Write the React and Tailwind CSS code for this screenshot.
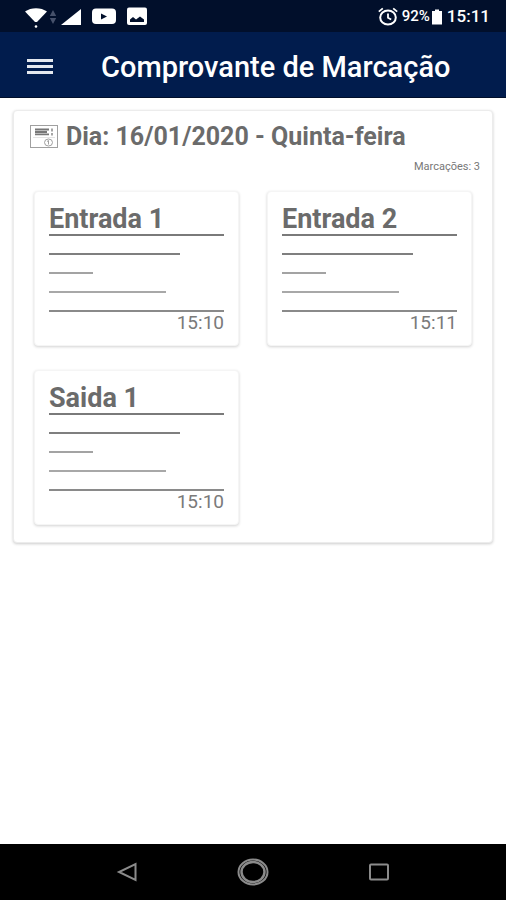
import { useState } from 'react';

const punches = [
  { label: 'Entrada 1', time: '15:10' },
  { label: 'Entrada 2', time: '15:11' },
  { label: 'Saida 1', time: '15:10' },
];

function StatusBar() {
  return (
    <div className="flex h-8 items-center justify-between bg-[#010f2b] pl-6 pr-4 text-white">
      <div className="flex items-center gap-2 pt-px">
        <div className="flex items-center gap-px">
          <svg className="h-6 w-6" viewBox="0 0 24 24" fill="currentColor">
            <path d="M1 6.500C7 2 17 2 23 6.500L13 17h-2z" />
            <circle cx="12" cy="21.500" r="1.300" />
          </svg>
          <svg className="h-4 w-2" viewBox="0 0 8 16" fill="#46516b">
            <path d="M4 1l3.200 6H.8zM4 15L.8 9h6.400z" />
          </svg>
        </div>
        <svg className="-ml-1 h-5 w-5" viewBox="0 0 20 20" fill="currentColor">
          <path d="M20 2v16H0z" />
        </svg>
        <svg className="ml-[3px] h-5 w-6" viewBox="0 0 24 20">
          <rect x="0" y="1.500" width="24" height="15.500" rx="4" fill="#fff" />
          <path d="M9 6.500v6l6-3z" fill="#010f2b" />
        </svg>
        <svg className="ml-[3px] h-5 w-5" viewBox="0 0 20 20">
          <rect x="0" y="0.500" width="20" height="17.500" rx="2" fill="#fff" />
          <path d="M3 15v-2.500l3-2.500 3 2.500 4-3 4 3V15z" fill="#010f2b" />
        </svg>
      </div>
      <div className="flex items-center gap-1 pt-px font-medium">
        <svg className="h-5 w-5" viewBox="0 0 20 20" fill="none" stroke="currentColor" strokeWidth="2">
          <ellipse cx="10" cy="10.500" rx="7.800" ry="7" />
          <path d="M10 6.500v4.300l3.200 1.700M.8 4.600L4.800 1.400M19.200 4.600l-4-3.200" strokeWidth="1.800" />
        </svg>
        <span className="text-[15px]">92%</span>
        <svg className="-ml-[3px] h-4 w-3" viewBox="0 0 12 16" fill="currentColor">
          <path d="M1 2h3V.5h4V2h3v13.500H1z" />
        </svg>
        <span className="text-[17px]">15:11</span>
      </div>
    </div>
  );
}

function ReceiptIcon() {
  return (
    <svg className="h-6 w-7 shrink-0" viewBox="0 0 28 24" fill="none" stroke="#a0a0a0">
      <rect x="0.500" y="0.500" width="27" height="22" />
      <path d="M5 4.500h14M5 7h12M5 9.300h14" stroke="#777" strokeWidth="1.800" />
      <path d="M22 3.500v3M22 8v2.500" stroke="#888" strokeWidth="1.500" />
      <path d="M3 12.500h22" stroke="#e4e4e4" />
      <ellipse cx="18.500" cy="17.500" rx="4" ry="3.500" />
      <path d="M18.500 15.500v4M17 16.500l1.500-1" />
    </svg>
  );
}

function PunchCard({ label, time }) {
  return (
    <article className="rounded-sm border border-[#f5f5f5] bg-white px-[14px] py-3 shadow-[0_1px_3px_rgba(0,0,0,0.18)]">
      <h3 className="text-[27px] leading-[30px] font-bold text-[#6b6b6b]">{label}</h3>
      <div className="flex flex-col gap-[17px]">
        <div className="h-[2px] w-full bg-[#7a7a7a]" />
        <div className="h-[2px] w-3/4 bg-[#7f7f7f]" />
        <div className="h-[2px] w-1/4 bg-[#a3a3a3]" />
        <div className="h-[2px] w-2/3 bg-[#a8a8a8]" />
        <div className="h-[2px] w-full bg-[#8a8a8a]" />
      </div>
      <p className="pt-px text-right text-[19px] leading-5 text-[#7a7a7a]">{time}</p>
    </article>
  );
}

export default function App() {
  const [menuOpen, setMenuOpen] = useState(false);

  return (
    <div className="flex min-h-screen flex-col bg-white font-['Roboto',sans-serif]">
      <StatusBar />
      <header className="flex h-[66px] items-center border-b border-[#010f2b] bg-[#011c4d] px-[27px] text-white">
        <button
          type="button"
          aria-label="Menu"
          aria-expanded={menuOpen}
          onClick={() => setMenuOpen(!menuOpen)}
          className="mt-1 flex w-[26px] flex-col gap-[3px]"
        >
          <span className="h-[3px] w-full bg-[#e4e8ef]" />
          <span className="h-[3px] w-full bg-[#e4e8ef]" />
          <span className="h-[3px] w-full bg-[#e4e8ef]" />
        </button>
        <h1 className="ml-12 pt-1 text-[29px] leading-8 font-medium whitespace-nowrap">Comprovante de Marcação</h1>
      </header>

      <main className="flex-1 px-[13px] pt-3">
        <section className="rounded-sm border border-[#ececec] bg-white px-5 pb-[17px] shadow-[0_1px_3px_rgba(0,0,0,0.2)]">
          <div className="-ml-1 flex items-center gap-2 pt-3">
            <ReceiptIcon />
            <h2 className="text-[25px] leading-7 font-bold whitespace-nowrap text-[#6b6b6b]">
              Dia: 16/01/2020 - Quinta-feira
            </h2>
          </div>
          <p className="-mr-2 pt-2 text-right text-[11px] leading-4 text-[#777]">Marcações: 3</p>
          <div className="grid grid-cols-2 gap-x-7 gap-y-6 pt-4">
            {punches.map((p) => (
              <PunchCard key={p.label} label={p.label} time={p.time} />
            ))}
          </div>
        </section>
      </main>

      <nav className="flex h-14 items-center justify-between bg-black px-[115px]">
        <button type="button" aria-label="Voltar">
          <svg className="h-6 w-6" viewBox="0 0 24 24" fill="none" stroke="#8b8b8b" strokeWidth="2">
            <path d="M20.500 4v16L4 12z" />
          </svg>
        </button>
        <button type="button" aria-label="Início">
          <svg className="h-8 w-8" viewBox="0 0 32 32" fill="none" stroke="#8b8b8b">
            <ellipse cx="16" cy="16" rx="14.500" ry="12.500" strokeWidth="2" />
            <ellipse cx="16" cy="16" rx="11.500" ry="10" strokeWidth="2.500" />
          </svg>
        </button>
        <button type="button" aria-label="Recentes">
          <svg className="h-6 w-6" viewBox="0 0 24 24" fill="none" stroke="#8b8b8b" strokeWidth="2">
            <rect x="3" y="4.500" width="18" height="15" rx="1" />
          </svg>
        </button>
      </nav>
    </div>
  );
}
